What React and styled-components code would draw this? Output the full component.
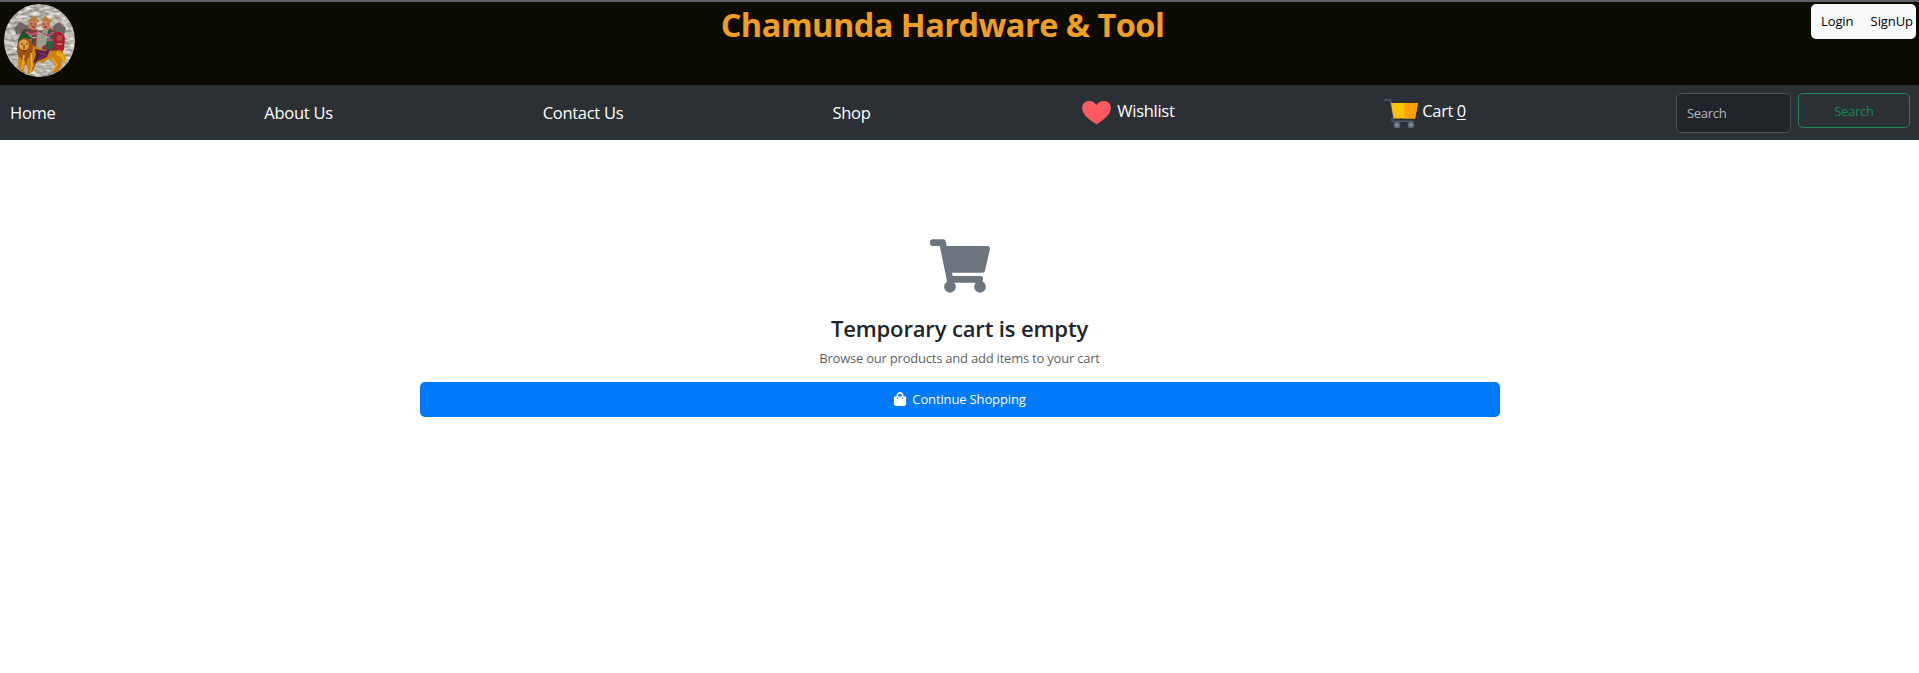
import React from 'react';
import styled, { createGlobalStyle } from 'styled-components';
import { FaShoppingCart, FaShoppingBag } from 'react-icons/fa';

const GlobalStyle = createGlobalStyle`
  * { box-sizing: border-box; }
  body { margin: 0; background: #fff; color: #212529; font-family: "Segoe UI", "Open Sans", "Noto Sans", sans-serif; font-size: 13px; line-height: 20px; }
  h1, h2, p { margin: 0; }
  a { color: inherit; text-decoration: none; }
`;

const Header = styled.header`
  height: 85px;
  border-top: 2px solid #626066;
  background: #0b0b02;
  display: grid;
  grid-template-columns: 105px 1fr 105px;
  align-items: start;
  padding: 2px 3px 0 4px;
`;
const Logo = styled.svg`
  display: block;
  width: 71px;
  height: 73px;
`;
const Title = styled.h1`
  justify-self: center;
  margin-right: 35px;
  color: #f09e20;
  font-size: 32.5px;
  font-weight: 700;
  line-height: 42px;
  white-space: nowrap;
  letter-spacing: -0.53px;
`;
const Account = styled.div`
  height: 35px;
  border-radius: 5px;
  background: #f8f9fa;
  color: #000;
  display: flex;
  justify-content: space-between;
  padding: 7px 3px 0 10px;
`;
const Label = styled.span`
  white-space: nowrap;
  letter-spacing: ${p => p.$track || 0}px;
`;

const Nav = styled.nav`
  height: 55px;
  background: #2b3035;
  color: #fff;
  display: flex;
  justify-content: space-between;
  align-items: flex-start;
  padding: 8px 9px 0 10px;
`;
const NavLink = styled.a`
  display: flex;
  width: ${p => p.$w}px;
  font-size: 16.5px;
  line-height: 24px;
  padding-top: ${p => (p.$icon ? 6 : 8)}px;
  gap: ${p => p.$gap || 0}px;
  white-space: nowrap;
  letter-spacing: -0.28px;
  svg { flex: none; }
`;
const Count = styled.span`
  text-decoration: underline;
  text-underline-offset: 2px;
  margin-left: 3.5px;
`;
const SearchForm = styled.form`
  display: flex;
  align-items: flex-start;
  gap: 7px;
`;
const SearchInput = styled.input`
  width: 115px;
  height: 40px;
  border: 1px solid #495057;
  border-radius: 5px;
  background: #212529;
  padding: 0 10px;
  color: #dee2e6;
  font: inherit;
  letter-spacing: -0.3px;
  &::placeholder { color: #b4b8bc; opacity: 1; }
`;
const SearchButton = styled.button`
  width: 112px;
  height: 35px;
  border: 1px solid #198754;
  border-radius: 5px;
  background: transparent;
  color: #198754;
  font: inherit;
  letter-spacing: -0.3px;
  padding: 1px 0 0;
`;

const Empty = styled.main`
  width: 1080px;
  margin: 96px auto 0;
  display: flex;
  flex-direction: column;
  align-items: center;
`;
const EmptyTitle = styled.h2`
  margin-top: 16px;
  font-size: 22px;
  font-weight: 600;
  line-height: 32px;
  white-space: nowrap;
  letter-spacing: -0.14px;
`;
const EmptyText = styled.p`
  margin-top: 4px;
  color: rgba(33, 37, 41, 0.75);
  white-space: nowrap;
  letter-spacing: -0.22px;
`;
const ShopButton = styled.button`
  width: 100%;
  height: 35px;
  margin-top: 14px;
  border: 0;
  border-radius: 5px;
  background: #007bff;
  color: #fff;
  font: inherit;
  font-weight: 500;
  padding: 0 0 1px;
  display: flex;
  align-items: center;
  justify-content: center;
  gap: 5px;
`;

function LogoArt() {
  return (
    <Logo viewBox="0 0 71 73" preserveAspectRatio="none">
      <defs>
        <clipPath id="disc"><ellipse cx="35.5" cy="36.5" rx="35.5" ry="36.5" /></clipPath>
        <filter id="stone" x="0" y="0" width="100%" height="100%" colorInterpolationFilters="sRGB">
          <feTurbulence type="fractalNoise" baseFrequency="0.14 0.34" numOctaves="3" seed="4" />
          <feColorMatrix values="0.7 0 0 0 0.38  0.7 0 0 0 0.37  0.7 0 0 0 0.34  0 0 0 0 1" />
        </filter>
      </defs>
      <g clipPath="url(#disc)">
        <rect width="71" height="73" filter="url(#stone)" />
        <path d="M10 24l6-6 8 4v7l-12 1zM49 22l6-4 7 6-2 8-11-3z" fill="#6d6664" />
        <path d="M18 26l8-2 10 3 9-3 8 4 4 18-10 4H18l-4-13z" fill="#843842" />
        <path d="M14 35l7-10 5 3-3 14-5 4-4-3z" fill="#17572c" />
        <path d="M24 27l6 4-1 17-7-3z" fill="#205e30" />
        <path d="M33 27l5 2v18h-6z" fill="#a49a90" />
        <path d="M38 27l7-2-1 14-6 4z" fill="#91a486" />
        <path d="M44 26l6 2 1 14-5 6-4-6z" fill="#2b613c" />
        <path d="M50 29l6-1 5 5-1 12-3 6-7-3z" fill="#a51e2e" />
        <ellipse cx="29" cy="21" rx="4.5" ry="5" fill="#c77a58" />
        <ellipse cx="42" cy="21" rx="4.5" ry="5" fill="#ca8058" />
        <circle cx="55.5" cy="34" r="3" fill="#bd4543" />
        <path d="M24 18l1-3 3-1 2-3 2 3 3 2v3q-5-4-11-1zM37 18l1-3 2-1 1-3 3 3 3 2-1 3q-4-4-9-1z" fill="#b47d3b" />
        <path d="M26.5 20h1.5m3 0h1M39 20h1.5m3 0h1M28 23h3m9 0h3" stroke="#562417" strokeWidth="1" />
        <path d="M22 28l6 3 6-3M39 29l5 3 6-4M22 36h6M43 36h6" stroke="#c64c81" strokeWidth="2" fill="none" />
        <path d="M25 31l4 3 3-1M41 33l5 1M53 40h5" stroke="#d8b59b" strokeWidth="1" fill="none" />
        <path d="M14 45l6 5 8-9 8 4 12 2 9-1 5 7-1 4-4-1 1 6-5 7-5-1 3-6-5-8-7 5-8-2-2 10-6 4 1-5-2-7-4 12-5-1 2-4-1-8z" fill="#cf8210" />
        <path d="M53 47q8 2 9 8l-2 5q-3-8-8-9z" fill="#e6a719" />
        <path d="M13 43q1-9 8-9 8 1 8 9-1 11-9 14-8-4-7-14z" fill="#9c5514" />
        <ellipse cx="20" cy="41" rx="5" ry="5.5" fill="#e1a33a" />
        <path d="M17 40h2m3 0h2M20 41v4m-3 1q3 2 6 0" stroke="#56290f" strokeWidth="1" fill="none" />
        <path d="M31 45l10 2 5-2-3 8-7 3-7 4 3-10z" fill="#571f50" />
        <path d="M34 48l7 3-8 6" stroke="#8d3d65" fill="none" />
        <path d="M20 51l-2 14M27 49l1 13-2 6M48 54l5 7-4 5" stroke="#eaaa2c" strokeWidth="1.7" fill="none" />
        <path d="M23 51l-1 10M32 58l-3 7" stroke="#854b12" fill="none" />
      </g>
    </Logo>
  );
}

function Heart() {
  return (
    <svg width="31" height="26" viewBox="0 0 31 26">
      <path d="M16.5 25.3C11.5 22.3 2.2 16.5 2.2 9 2.2 4.6 5.2 2 9.2 2c3 0 5.600 1.500 7.300 4.100C18.200 3.500 20.800 2 23.800 2c4 0 7 2.600 7 7 0 7.500-9.300 13.300-14.300 16.300z" fill="#ff5a5f" />
    </svg>
  );
}

function Trolley() {
  return (
    <svg width="35" height="30" viewBox="0 0 35 30">
      <path d="M0 1h6.500l3.200 18.200H9q-1.200.3-1.200 1.500t1.200 1.500h20.500" fill="none" stroke="#4b5a66" strokeWidth="1.600" />
      <path d="M7 4h27l-3 15.500H9.700z" fill="#ffc107" />
      <path d="M20.500 4H34l-3 15.500H20.500z" fill="#ffa000" />
      <circle cx="13" cy="26" r="2.300" fill="#8d9aa3" stroke="#5d6d79" strokeWidth="2" />
      <circle cx="27" cy="26" r="2.300" fill="#8d9aa3" stroke="#5d6d79" strokeWidth="2" />
    </svg>
  );
}

export default function App() {
  return (
    <>
      <GlobalStyle />
      <Header>
        <LogoArt />
        <Title>Chamunda Hardware &amp; Tool</Title>
        <Account><Label $track={-0.1}>Login</Label><Label $track={-0.08}>SignUp</Label></Account>
      </Header>
      <Nav>
        <NavLink $w={45}>Home</NavLink>
        <NavLink $w={69}>About Us</NavLink>
        <NavLink $w={80.5}>Contact Us</NavLink>
        <NavLink $w={38}>Shop</NavLink>
        <NavLink $w={94.5} $icon $gap={6.5}><Heart /><span>Wishlist</span></NavLink>
        <NavLink $w={83} $icon $gap={3.5}><Trolley /><span>Cart<Count>0</Count></span></NavLink>
        <SearchForm>
          <SearchInput placeholder="Search" />
          <SearchButton type="button">Search</SearchButton>
        </SearchForm>
      </Nav>
      <Empty>
        <FaShoppingCart size={60} color="#6c757d" />
        <EmptyTitle>Temporary cart is empty</EmptyTitle>
        <EmptyText>Browse our products and add items to your cart</EmptyText>
        <ShopButton><FaShoppingBag size={14} /><Label $track={-0.14}>Continue Shopping</Label></ShopButton>
      </Empty>
    </>
  );
}
